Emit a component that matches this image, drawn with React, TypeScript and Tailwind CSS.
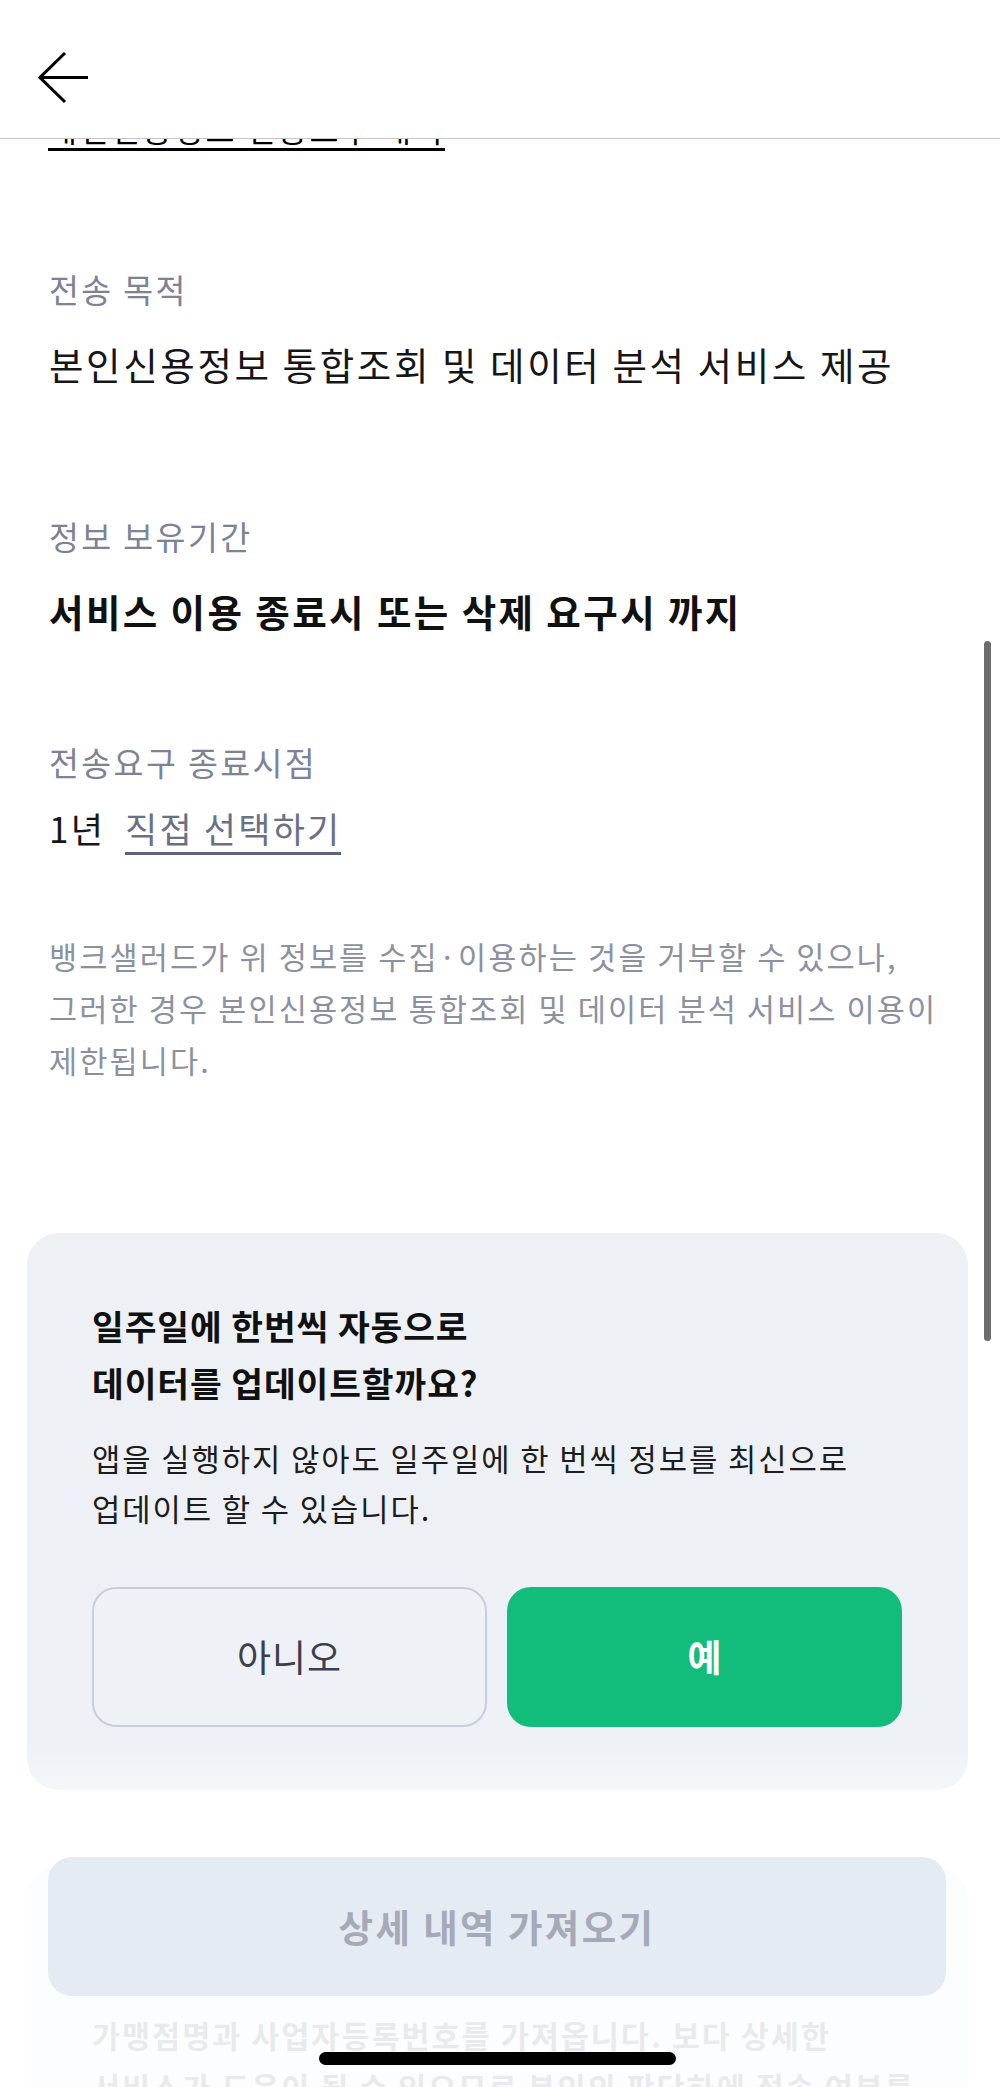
import React from 'react';

const FONT = "font-['Noto_Sans_CJK_KR','Noto_Sans',sans-serif]";

const BackArrow: React.FC = () => (
  <svg width="54" height="56" viewBox="0 0 54 56" fill="none" className="block">
    <path d="M27 2 L2 26.5 L27 51 M2 26.5 H50" stroke="#000" strokeWidth="3" />
  </svg>
);

const InfoLabel: React.FC<{ children: React.ReactNode; className?: string }> = ({ children, className }) => (
  <p className={`whitespace-nowrap text-[32.5px] leading-[44px] tracking-[2.4px] text-[#7d8396] ${className ?? ''}`}>
    {children}
  </p>
);

const App: React.FC = () => {
  return (
    <div className={`relative h-[2087px] w-[1000px] overflow-hidden bg-white ${FONT}`}>
      {/* Top navigation */}
      <header className="h-[139px] border-b-[1.5px] border-[#c6c6c6] bg-white pl-[38px] pt-[51px]">
        <button type="button" aria-label="뒤로가기">
          <BackArrow />
        </button>
      </header>

      {/* Previous row, scrolled under the header */}
      <div className="flex h-[12px] items-end overflow-hidden px-[48px]">
        <span className="inline-block whitespace-nowrap border-b-[3px] border-black pb-[5px] text-[31.5px] leading-[30px] tracking-[2.5px] text-black">
          개인신용정보 전송요구 내역
        </span>
      </div>

      {/* Transfer details */}
      <section className="px-[49px]">
        <InfoLabel className="mt-[116px]">전송 목적</InfoLabel>
        <p className="mt-[28px] whitespace-nowrap text-[37.5px] leading-[50px] tracking-[2.6px] text-[#161616]">
          본인신용정보 통합조회 및 데이터 분석 서비스 제공
        </p>

        <InfoLabel className="mt-[125px]">정보 보유기간</InfoLabel>
        <p className="mt-[28px] whitespace-nowrap text-[37.5px] font-bold leading-[50px] tracking-[2.4px] text-[#111]">
          서비스 이용 종료시 또는 삭제 요구시 까지
        </p>

        <InfoLabel className="mt-[104px]">전송요구 종료시점</InfoLabel>
        <div className="mt-[20px] flex items-start text-[35px] leading-[48px] tracking-[2.2px]">
          <span className="text-[#161616]">1년</span>
          <span className="ml-[20px] border-b-[3px] border-[#5c6278] text-[#6a7085]">직접 선택하기</span>
        </div>

        <p className="mt-[75px] whitespace-nowrap text-[30.6px] leading-[52px] tracking-[2.1px] text-[#8c91a1]">
          뱅크샐러드가 위 정보를 수집·이용하는 것을 거부할 수 있으나,
          <br />
          그러한 경우 본인신용정보 통합조회 및 데이터 분석 서비스 이용이
          <br />
          제한됩니다.
        </p>
      </section>

      {/* Weekly auto update prompt */}
      <div className="ml-[27px] mt-[147px] w-[941px] rounded-[32px] bg-[#edf1f6] pb-[63px] pl-[65px] pr-[66px] pt-[64px]">
        <h2 className="whitespace-nowrap text-[34.5px] font-bold leading-[57px] tracking-[0.9px] text-[#111]">
          일주일에 한번씩 자동으로
          <br />
          데이터를 업데이트할까요?
        </h2>
        <p className="mt-[22px] whitespace-nowrap text-[30.8px] leading-[50px] tracking-[1.9px] text-[#1c1c1c]">
          앱을 실행하지 않아도 일주일에 한 번씩 정보를 최신으로
          <br />
          업데이트 할 수 있습니다.
        </p>
        <div className="mt-[54px] grid h-[140px] grid-cols-2 gap-[20px]">
          <button
            type="button"
            className="flex items-center justify-center rounded-[24px] border-2 border-[#c6cedb] bg-[#eef2f7] text-[37px] tracking-[1px] text-[#3b404c]"
          >
            아니오
          </button>
          <button
            type="button"
            className="flex items-center justify-center rounded-[24px] bg-[#12bd7b] text-[37px] font-semibold text-white"
          >
            예
          </button>
        </div>
      </div>

      {/* Detail import card */}
      <div className="ml-[27px] mt-[77px] w-[941px] rounded-[32px] bg-[#edf1f6] pb-[60px] pl-[65px] pr-[66px] pt-[142px]">
        <p className="whitespace-nowrap text-[30.5px] font-bold leading-[52px] tracking-[2px] text-[#6b7180]">
          가맹점명과 사업자등록번호를 가져옵니다. 보다 상세한
          <br />
          서비스가 도움이 될 수 있으므로 본인의 판단하에 접속 여부를
        </p>
      </div>

      {/* Bottom CTA over faded content */}
      <div className="absolute bottom-0 left-0 right-0 flex h-[347px] flex-col">
        <div className="h-[110px] bg-linear-to-b from-white/0 to-white/85" />
        <div className="flex-1 bg-white/85">
          <button
            type="button"
            className="ml-[48px] mt-[7px] flex h-[139px] w-[898px] items-center justify-center rounded-[24px] bg-[#e4ebf2] text-[37.5px] font-bold tracking-[2.4px] text-[#a5a9b8]"
          >
            상세 내역 가져오기
          </button>
        </div>
        <div className="absolute left-[319px] top-[312px] h-[13px] w-[357px] rounded-full bg-black" />
      </div>

      {/* Scroll indicator */}
      <div className="absolute left-[984px] top-[641px] h-[700px] w-[7px] rounded-full bg-[#6d6d6d]" />
    </div>
  );
};

export default App;
